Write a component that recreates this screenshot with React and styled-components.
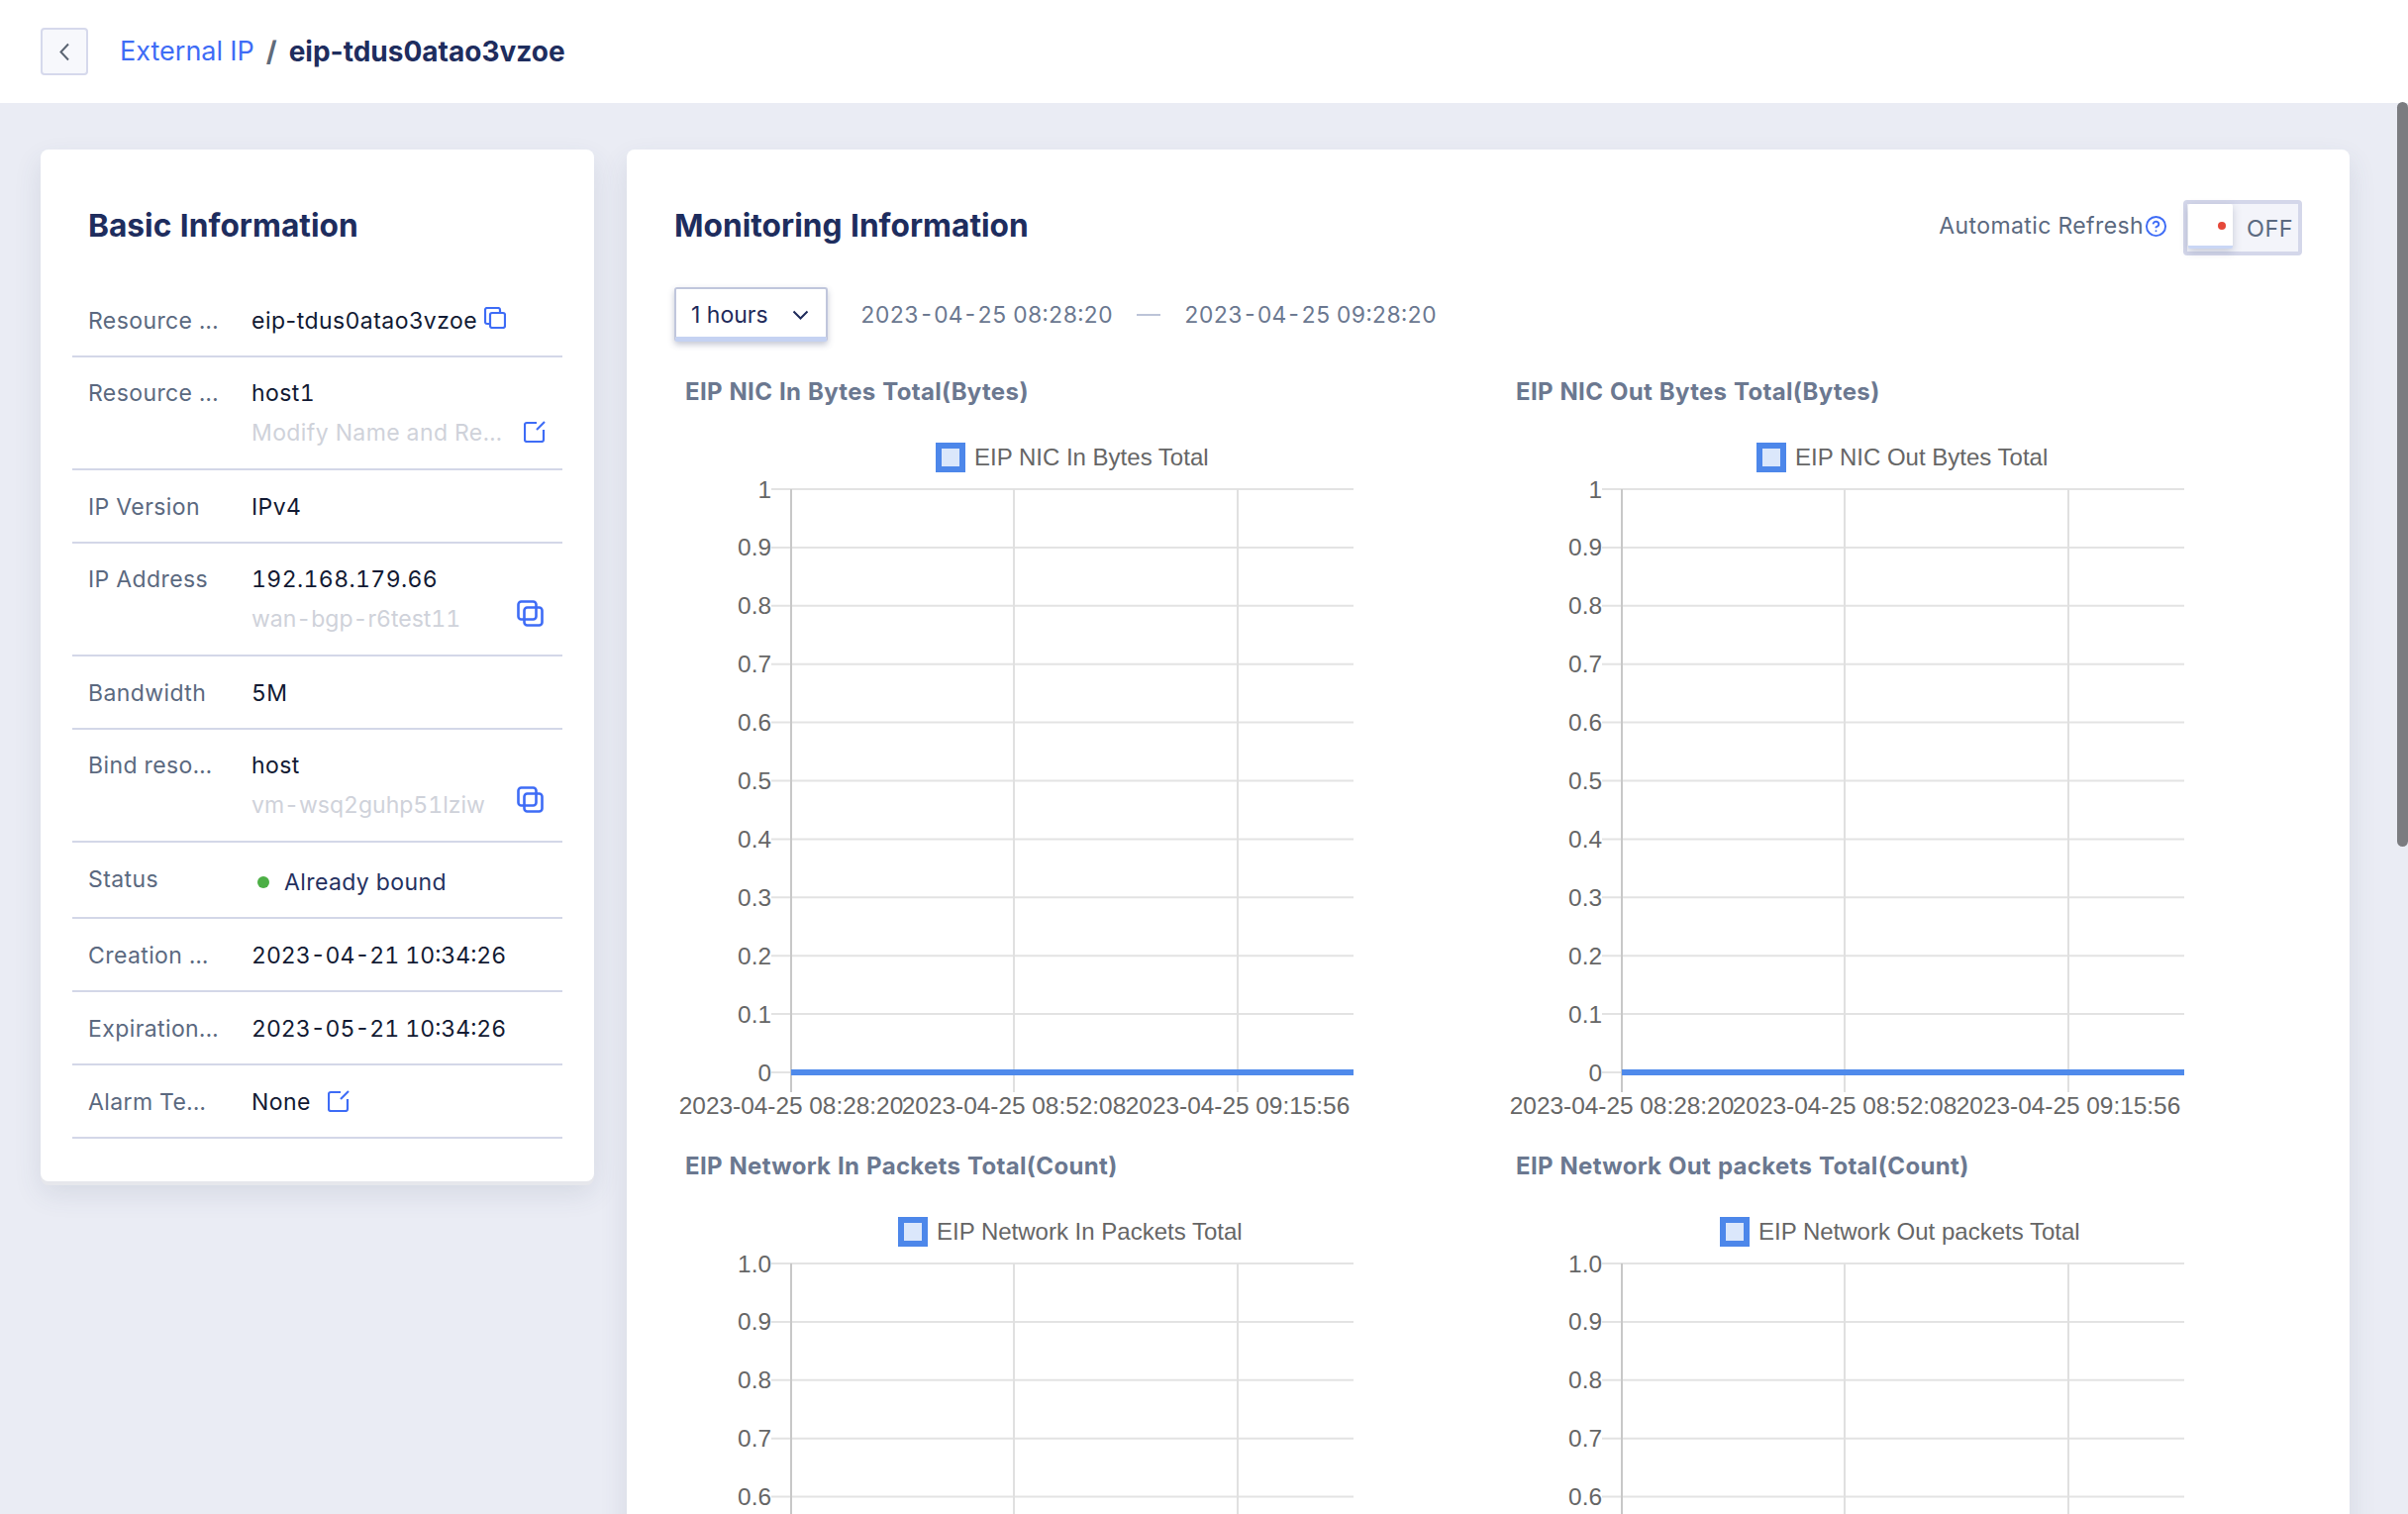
import React from 'react';
import styled, { createGlobalStyle } from 'styled-components';
import { CircleHelp } from 'lucide-react';

const GlobalStyle = createGlobalStyle`
    html, body {
        margin: 0;
        height: 100%;
        overflow: hidden;
        background: #eaecf4;
        font-family: Inter, "Noto Sans", sans-serif;
        font-variant-numeric: tabular-nums;
    }
`;

const Page = styled.div`
    position: relative;
    height: 1529px;
    overflow: hidden;
`;

const Header = styled.header`
    display: flex;
    align-items: center;
    gap: 32px;
    height: 104px;
    padding: 0 41px;
    box-sizing: border-box;
    background: #fff;
`;

const BackButton = styled.button`
    display: flex;
    align-items: center;
    justify-content: center;
    width: 48px;
    height: 48px;
    padding: 0;
    box-sizing: border-box;
    background: #f7f8fc;
    border: 2px solid #d6d9ec;
    border-radius: 4px;
`;

const Crumbs = styled.div`
    display: flex;
    align-items: center;
    gap: 12px;
    font-size: 28px;
    line-height: 40px;
`;

const CrumbLink = styled.span`
    color: #3e6cf6;
    font-size: 27px;
`;

const CrumbSlash = styled.span`
    color: #5f6b7a;
    font-weight: 700;
`;

const CrumbCurrent = styled.span`
    color: #1e2d5e;
    font-weight: 700;
    font-variant-numeric: normal;
`;

const Main = styled.main`
    display: flex;
    align-items: flex-start;
    gap: 33px;
    padding: 47px 41px 0;
`;

const Card = styled.section`
    background: #fff;
    border-radius: 8px;
    box-sizing: border-box;
    box-shadow: 0 4px 0 #e6e7ec, 0 12px 28px rgba(60, 70, 110, 0.12);
`;

const InfoCard = styled(Card)`
    width: 559px;
    flex: none;
    padding: 59px 32px 43px;
`;

const MonitorCard = styled(Card)`
    width: 1740px;
    flex: none;
    padding: 59px 48px 60px;
`;

const CardTitle = styled.h2`
    margin: 0;
    font-size: 31.7px;
    line-height: 36px;
    font-weight: 700;
    color: #1e2d5e;
`;

const InfoTitle = styled(CardTitle)`
    padding-left: 16px;
    margin-bottom: 41px;
`;

const Row = styled.div`
    position: relative;
    display: flex;
    height: ${(p) => p.$height || 74}px;
    padding: ${(p) => (p.$height === 114 ? '18px' : '19px')} 15px 0 16px;
    box-sizing: border-box;
    border-bottom: 2px solid #d3d7e8;
    font-size: 23px;
    line-height: 36px;
    letter-spacing: 0.4px;
`;

const Label = styled.div`
    width: 165px;
    flex: none;
    color: #5b6980;
`;

const Value = styled.div`
    display: flex;
    flex-direction: column;
    gap: 2px;
    color: #121a33;
`;

const InlineValue = styled.div`
    display: flex;
    align-items: center;
    height: 36px;
    color: #121a33;
    letter-spacing: ${(p) => (p.$tight ? 0 : p.$plain ? 0.5 : 0.4)}px;
    font-variant-numeric: ${(p) => (p.$plain ? 'normal' : 'tabular-nums')};
`;

const Sub = styled.div`
    line-height: 40px;
    color: #cfd2da;
    letter-spacing: ${(p) => (p.$tight ? 0 : 0.4)}px;
`;

const RowIcon = styled.span`
    position: absolute;
    right: ${(p) => p.$right}px;
    bottom: ${(p) => p.$bottom}px;
    display: flex;
`;

const CopyNudge = styled.span`
    display: flex;
    margin: -6px 0 0 7px;
`;

const EditNudge = styled.span`
    display: flex;
    margin: -2px 0 0 17px;
`;

const StatusValue = styled.div`
    display: flex;
    align-items: center;
    gap: 15px;
    height: 36px;
    padding: 3px 0 0 6px;
    color: #25315f;
`;

const StatusDot = styled.span`
    width: 12px;
    height: 12px;
    border-radius: 50%;
    background: #4caf45;
`;

const MonitorHead = styled.div`
    display: flex;
    align-items: center;
    justify-content: space-between;
    height: 36px;
`;

const Refresh = styled.div`
    display: flex;
    align-items: center;
    gap: 16px;
    font-size: 23px;
    letter-spacing: 0.4px;
    color: #5b6980;
`;

const RefreshLabel = styled.span`
    display: flex;
    align-items: center;
    gap: 1px;
`;

const Toggle = styled.div`
    display: flex;
    align-items: center;
    width: 120px;
    height: 56px;
    margin-top: 4px;
    padding-right: 5px;
    box-sizing: border-box;
    justify-content: flex-end;
    position: relative;
    background: #f3f4fa;
    border: 4px solid #d4d7ea;
    border-radius: 4px;
    color: #5b6980;
    font-size: 23.5px;
`;

const Knob = styled.span`
    position: absolute;
    left: 1px;
    top: 0;
    width: 45px;
    height: 45px;
    background: #fff;
    border-bottom: 3px solid #c9d6f5;
    box-sizing: border-box;
    border-radius: 2px;
    box-shadow: 0 3px 8px rgba(60, 70, 110, 0.25);
`;

const KnobDot = styled.span`
    position: absolute;
    right: 7px;
    top: 18px;
    width: 8px;
    height: 8px;
    border-radius: 50%;
    background: #e5483a;
`;

const Filters = styled.div`
    display: flex;
    align-items: center;
    margin-top: 44px;
    height: 55px;
    font-size: 22.8px;
`;

const Select = styled.div`
    display: flex;
    align-items: center;
    justify-content: space-between;
    width: 155px;
    height: 55px;
    padding: 3px 17px 0 15px;
    box-sizing: border-box;
    background: #fff;
    border: 2px solid #c0c6dc;
    border-bottom: 5px solid #c5d2f2;
    border-radius: 3px;
    box-shadow: 0 3px 6px rgba(60, 70, 110, 0.3);
    color: #1f2b5b;
    font-size: 23px;
    font-variant-numeric: normal;
`;

const DateText = styled.span`
    color: #6b7890;
    margin-left: ${(p) => p.$left}px;
`;

const DateDash = styled.span`
    width: 24px;
    height: 2px;
    margin-left: 24px;
    background: #bcc4d8;
`;

const ChartGrid = styled.div`
    display: grid;
    grid-template-columns: 839px 1fr;
    margin-top: 31px;
`;

const ChartBlock = styled.div`
    height: 782px;
`;

const ChartTitle = styled.h3`
    margin: 0;
    padding-left: 11px;
    font-size: 24px;
    line-height: 40px;
    font-weight: 700;
    letter-spacing: 0.3px;
    color: #6b7890;
`;

const ChartSvg = styled.svg`
    display: block;
    overflow: visible;
`;

const AxisText = styled.text`
    font-family: 'Liberation Sans', Arial, sans-serif;
    font-size: ${(p) => p.$size || 24.4}px;
    fill: #666;
`;

const Scrollbar = styled.div`
    position: absolute;
    right: 0;
    top: 103px;
    width: 11px;
    height: 752px;
    background: #7b7c80;
    border-radius: 6px;
`;

const BackIcon = () => (
    <svg width="12" height="19" viewBox="0 0 12 19" fill="none">
        <path d="M10 1.5 2.5 9.5l7.5 8" stroke="#5a6472" strokeWidth="2" />
    </svg>
);

const CopyIcon = () => (
    <svg width="22" height="22" viewBox="0 0 22 22" fill="none" stroke="#3e6cf6" strokeWidth="2.2">
        <path d="M5.5 17H3a2 2 0 0 1-2-2V3a2 2 0 0 1 2-2h11a2 2 0 0 1 2 2v2" />
        <rect x="6" y="6" width="15" height="15" rx="2" />
    </svg>
);

const DoubleCopyIcon = () => (
    <svg width="27" height="27" viewBox="0 0 27 27" fill="none" stroke="#3e6cf6" strokeWidth="2.6">
        <rect x="1.5" y="1.5" width="18" height="18" rx="3" />
        <rect x="7.5" y="7.5" width="18" height="18" rx="3" />
    </svg>
);

const EditIcon = () => (
    <svg width="22" height="22" viewBox="0 0 22 22" fill="none" stroke="#3e6cf6" strokeWidth="2.2">
        <path d="M13 2H3a2 2 0 0 0-2 2v15a2 2 0 0 0 2 2h15a2 2 0 0 0 2-2V9" />
        <path d="M13 9l8-8" />
    </svg>
);

const ChevronDown = () => (
    <svg width="17" height="10" viewBox="0 0 17 10" fill="none">
        <path d="M1.5 1.5 8.5 8.5l7-7" stroke="#1f2b5b" strokeWidth="2" />
    </svg>
);

const STEP = 58.9;
const TOP = 78;
const AXIS_X = 118;
const GRID_XS = [118, 343, 569];
const GRID_END = 686;

const Chart = ({ title, legend, labels, legendX }) => {
    const bottom = TOP + STEP * 10;
    return (
        <ChartBlock>
            <ChartTitle>{title}</ChartTitle>
            <ChartSvg width="760" height="742">
                {labels.map((label, i) => {
                    const y = TOP + STEP * i;
                    return (
                        <g key={label}>
                            <line x1={AXIS_X - 20} x2={GRID_END} y1={y} y2={y} stroke="#e3e3e3" strokeWidth="2" />
                            <AxisText x={AXIS_X - 20} y={y} dy="0.35em" textAnchor="end">
                                {label}
                            </AxisText>
                        </g>
                    );
                })}
                {GRID_XS.map((x, i) => (
                    <line
                        key={x}
                        x1={x}
                        x2={x}
                        y1={TOP}
                        y2={bottom + 20}
                        stroke={i === 0 ? '#c8c8c8' : '#e0e0e0'}
                        strokeWidth="2"
                    />
                ))}
                <line x1={AXIS_X} x2={GRID_END} y1={bottom} y2={bottom} stroke="#4f8aeb" strokeWidth="6" />
                <rect x={legendX + 3} y={34} width={24} height={24} fill="#dbe7fb" stroke="#4d87ea" strokeWidth="6" />
                <AxisText $size={24} x={legendX + 39} y={46} dy="0.35em">
                    {legend}
                </AxisText>
                {['2023-04-25 08:28:20', '2023-04-25 08:52:08', '2023-04-25 09:15:56'].map((t, i) => (
                    <AxisText key={t} x={GRID_XS[i]} y={bottom + 33.5} dy="0.35em" textAnchor="middle">
                        {t}
                    </AxisText>
                ))}
            </ChartSvg>
        </ChartBlock>
    );
};

const intTicks = ['1', '0.9', '0.8', '0.7', '0.6', '0.5', '0.4', '0.3', '0.2', '0.1', '0'];
const floatTicks = ['1.0', '0.9', '0.8', '0.7', '0.6', '0.5', '0.4', '0.3', '0.2', '0.1', '0.0'];

export default function App() {
    return (
        <Page>
            <GlobalStyle />
            <Header>
                <BackButton>
                    <BackIcon />
                </BackButton>
                <Crumbs>
                    <CrumbLink>External IP</CrumbLink>
                    <CrumbSlash>/</CrumbSlash>
                    <CrumbCurrent>eip-tdus0atao3vzoe</CrumbCurrent>
                </Crumbs>
            </Header>
            <Main>
                <InfoCard>
                    <InfoTitle>Basic Information</InfoTitle>
                    <Row>
                        <Label>Resource ...</Label>
                        <InlineValue $plain>
                            eip-tdus0atao3vzoe
                            <CopyNudge>
                                <CopyIcon />
                            </CopyNudge>
                        </InlineValue>
                    </Row>
                    <Row $height={114}>
                        <Label>Resource ...</Label>
                        <Value>
                            host1
                            <Sub>Modify Name and Re...</Sub>
                        </Value>
                        <RowIcon $right={17} $bottom={26}>
                            <EditIcon />
                        </RowIcon>
                    </Row>
                    <Row>
                        <Label>IP Version</Label>
                        <InlineValue>IPv4</InlineValue>
                    </Row>
                    <Row $height={114}>
                        <Label>IP Address</Label>
                        <Value>
                            192.168.179.66
                            <Sub $tight>wan-bgp-r6test11</Sub>
                        </Value>
                        <RowIcon $right={19} $bottom={28}>
                            <DoubleCopyIcon />
                        </RowIcon>
                    </Row>
                    <Row>
                        <Label>Bandwidth</Label>
                        <InlineValue>5M</InlineValue>
                    </Row>
                    <Row $height={114}>
                        <Label>Bind reso...</Label>
                        <Value>
                            host
                            <Sub $tight>vm-wsq2guhp51lziw</Sub>
                        </Value>
                        <RowIcon $right={19} $bottom={28}>
                            <DoubleCopyIcon />
                        </RowIcon>
                    </Row>
                    <Row $height={77}>
                        <Label>Status</Label>
                        <StatusValue>
                            <StatusDot />
                            Already bound
                        </StatusValue>
                    </Row>
                    <Row>
                        <Label>Creation ...</Label>
                        <InlineValue $tight>2023-04-21 10:34:26</InlineValue>
                    </Row>
                    <Row>
                        <Label>Expiration...</Label>
                        <InlineValue $tight>2023-05-21 10:34:26</InlineValue>
                    </Row>
                    <Row>
                        <Label>Alarm Te...</Label>
                        <InlineValue>
                            None
                            <EditNudge>
                                <EditIcon />
                            </EditNudge>
                        </InlineValue>
                    </Row>
                </InfoCard>
                <MonitorCard>
                    <MonitorHead>
                        <CardTitle>Monitoring Information</CardTitle>
                        <Refresh>
                            <RefreshLabel>
                                Automatic Refresh
                                <CircleHelp size={23} color="#3e6cf6" strokeWidth={2} />
                            </RefreshLabel>
                            <Toggle>
                                <Knob>
                                    <KnobDot />
                                </Knob>
                                OFF
                            </Toggle>
                        </Refresh>
                    </MonitorHead>
                    <Filters>
                        <Select>
                            1 hours
                            <ChevronDown />
                        </Select>
                        <DateText $left={33}>2023-04-25 08:28:20</DateText>
                        <DateDash />
                        <DateText $left={24}>2023-04-25 09:28:20</DateText>
                    </Filters>
                    <ChartGrid>
                        <Chart
                            title="EIP NIC In Bytes Total(Bytes)"
                            legend="EIP NIC In Bytes Total"
                            labels={intTicks}
                            legendX={264}
                        />
                        <Chart
                            title="EIP NIC Out Bytes Total(Bytes)"
                            legend="EIP NIC Out Bytes Total"
                            labels={intTicks}
                            legendX={254}
                        />
                        <Chart
                            title="EIP Network In Packets Total(Count)"
                            legend="EIP Network In Packets Total"
                            labels={floatTicks}
                            legendX={226}
                        />
                        <Chart
                            title="EIP Network Out packets Total(Count)"
                            legend="EIP Network Out packets Total"
                            labels={floatTicks}
                            legendX={217}
                        />
                    </ChartGrid>
                </MonitorCard>
            </Main>
            <Scrollbar />
        </Page>
    );
}
